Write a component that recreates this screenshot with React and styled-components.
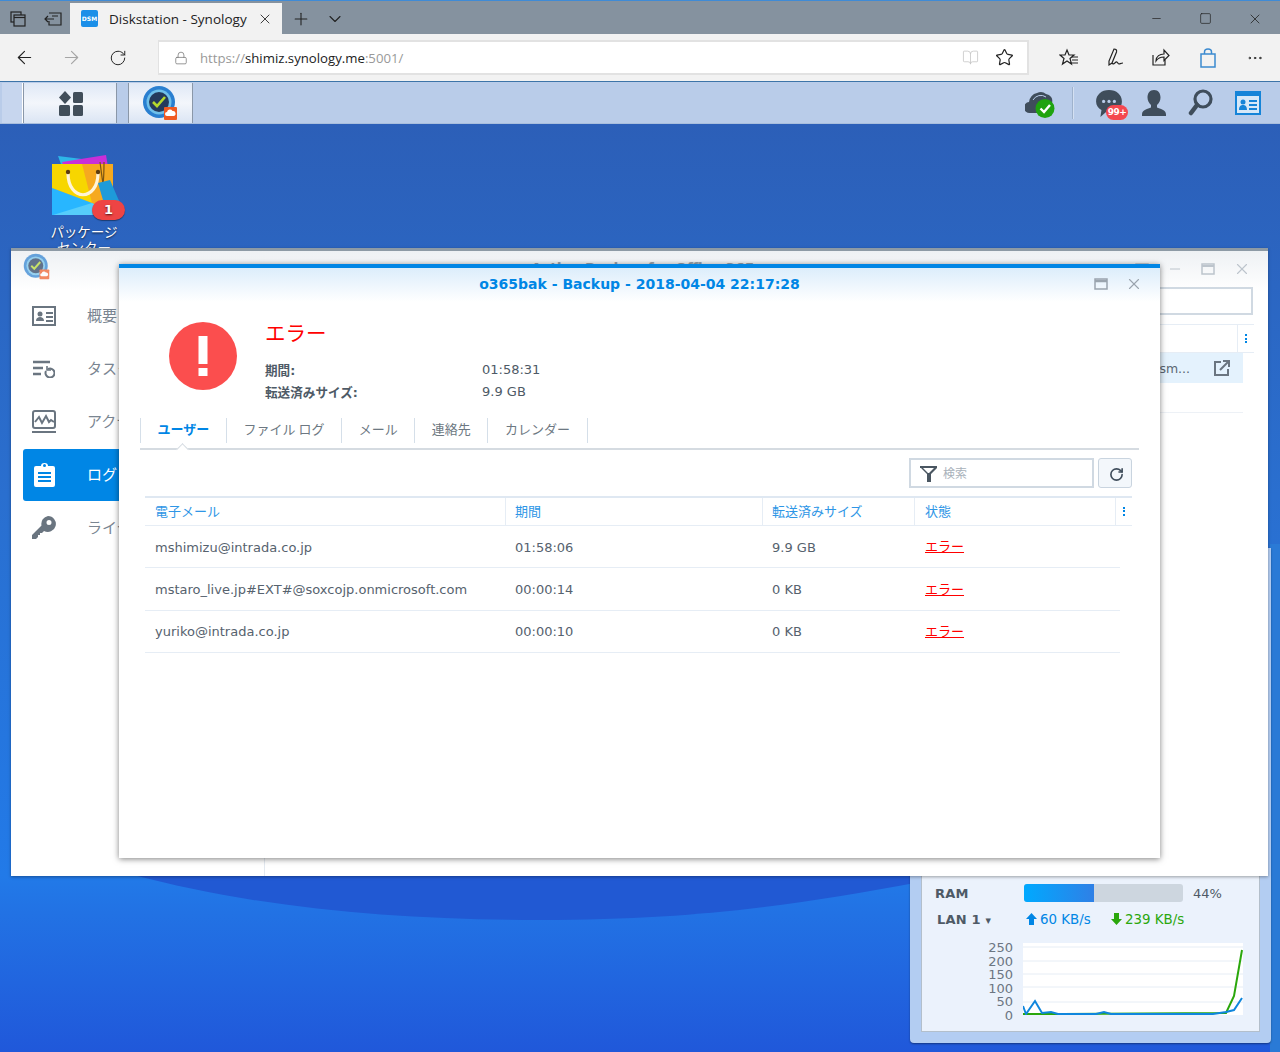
import React from "react";
import styled, { createGlobalStyle } from "styled-components";
import { ArrowLeft, ArrowRight, RotateCw, Lock, Star, Plus, ChevronDown, X, Minus, Square, MoreHorizontal, BookOpen } from "lucide-react";

const SANS = `"DejaVu Sans", "Noto Sans CJK JP", sans-serif`;
const UI = `"Open Sans", "Noto Sans CJK JP", sans-serif`;

const GlobalStyle = createGlobalStyle`
  html, body { margin: 0; padding: 0; background: #2a62bd; }
  * { box-sizing: border-box; }
`;

const Page = styled.div`
  display: flex;
  flex-direction: column;
  width: 1280px;
  height: 1052px;
  overflow: hidden;
  font-family: ${SANS};
`;

/* browser chrome */
const TabStrip = styled.div`
  display: flex;
  align-items: stretch;
  height: 34px;
  padding-top: 2px;
  background: #85929f;
  border-top: 1px solid #3f8bd6;
  color: #222;
`;

const StripButton = styled.div`
  display: flex;
  align-items: center;
  justify-content: center;
  width: ${(p) => p.$w || 35}px;
`;

const BrowserTab = styled.div`
  display: flex;
  align-items: center;
  width: 212px;
  padding: 0 9px 0 11px;
  background: #f2f2f2;
  font-family: ${UI};
  font-size: 13.5px;
  color: #222;
`;

const Favicon = styled.div`
  width: 17px;
  height: 17px;
  margin-right: 11px;
  border-radius: 2px;
  background: #1b8fe8;
  color: #fff;
  font: bold 6px/17px "DejaVu Sans", sans-serif;
  text-align: center;
`;

const TabTitle = styled.div`
  flex: 1;
  white-space: nowrap;
`;

const WinButtons = styled.div`
  display: flex;
  margin-left: auto;
  padding-right: 1px;
`;

const WinButton = styled.div`
  display: flex;
  align-items: center;
  justify-content: center;
  width: 49px;
`;

const AddressRow = styled.div`
  display: flex;
  align-items: center;
  height: 48px;
  background: #f2f2f2;
  border-bottom: 1px solid #3d74a8;
  color: #222;
`;

const NavButton = styled.div`
  display: flex;
  align-items: center;
  justify-content: center;
  width: ${(p) => p.$w || 46.5}px;
  color: ${(p) => (p.$dim ? "#a5a5a5" : "#222")};
`;

const UrlBox = styled.div`
  display: flex;
  align-items: center;
  width: 871px;
  height: 35px;
  margin-left: 17px;
  padding: 0 13px 0 15px;
  background: #fff;
  border: 2px solid #e2e2e2;
  border-left-width: 1px;
  font-family: ${UI};
  font-size: 13.2px;
  color: #999;
`;

const UrlText = styled.div`
  margin-left: 12px;
  flex: 1;
  b { font-weight: 400; color: #222; }
`;

const BookSlot = styled.div`
  display: flex;
  margin-right: 16px;
`;

const RightTools = styled.div`
  display: flex;
  align-items: center;
  margin-left: 17px;
`;

/* DSM taskbar */
const Taskbar = styled.div`
  display: flex;
  align-items: stretch;
  height: 42px;
  padding: 1px 0 0 2px;
  background: #b9cce9;
  border-bottom: 1px solid #a9bedd;
`;

const TaskSpacer = styled.div`
  width: 21px;
  background: #c7d6ee;
  border-right: 1px solid #fff;
`;

const TaskButton = styled.div`
  display: flex;
  align-items: center;
  justify-content: center;
  width: ${(p) => p.$w}px;
  margin-right: ${(p) => p.$gap || 0}px;
  padding: ${(p) => p.$pad || 0};
  background: linear-gradient(#dfe8f6, #f3f6fb 50%, #dbe5f4);
  border-left: 1px solid #8a97a8;
  border-right: 1px solid #8a97a8;
`;

const TaskRight = styled.div`
  display: flex;
  align-items: center;
  margin-left: auto;
  padding-right: 13px;
`;

const TaskDivider = styled.div`
  width: 2px;
  height: 32px;
  margin: 0 21px 0 15px;
  background: #9fb2cc;
  border-right: 1px solid #d4e0f2;
`;

const TaskIcon = styled.div`
  position: relative;
  display: flex;
  align-items: center;
  width: 32px;
  height: 32px;
  margin-left: ${(p) => p.$ml || 0}px;
`;

const CountBadge = styled.div`
  position: absolute;
  left: 11px;
  top: 18px;
  width: 22px;
  height: 15px;
  border-radius: 8px;
  background: #f4474f;
  color: #fff;
  font: bold 9px/15px "DejaVu Sans", sans-serif;
  text-align: center;
  letter-spacing: -0.5px;
`;

/* desktop */
const Desktop = styled.div`
  position: relative;
  flex: 1;
  overflow: hidden;
`;

const Wallpaper = styled.svg`
  position: absolute;
  left: 0;
  top: 0;
`;

const DesktopIcon = styled.div`
  position: absolute;
  left: 33px;
  top: 30px;
  width: 102px;
  color: #fff;
  font-size: 13.5px;
  font-family: "Noto Sans CJK JP", sans-serif;
  line-height: 16px;
  text-align: center;
  text-shadow: 0 1px 2px rgba(0, 0, 0, 0.7);
`;

const BagWrap = styled.div`
  position: relative;
  width: 76px;
  height: 68px;
  margin: 0 0 0 19px;
  svg { display: block; }
`;

const IconBadge = styled.div`
  position: absolute;
  left: 40px;
  top: 46px;
  width: 33px;
  height: 20px;
  border-radius: 10px;
  background: #ee4444;
  box-shadow: 0 1px 1px rgba(0, 0, 0, 0.4);
  color: #fff;
  font: bold 13px/20px "DejaVu Sans", sans-serif;
  text-align: center;
`;

const DesktopLabel = styled.div`
  margin-top: 1px;
`;

const Widget = styled.div`
  position: absolute;
  left: 910px;
  top: 424px;
  width: 361px;
  height: 495px;
  display: flex;
  flex-direction: column;
  justify-content: flex-end;
  padding: 0 11px 11px;
  background: #b3cdf2;
  border-radius: 0 0 4px 4px;
  box-shadow: 0 1px 2px rgba(0, 0, 0, 0.4);
`;

const WidgetInner = styled.div`
  height: 190px;
  padding: 0 15px 0 13px;
  margin-top: auto;
  background: #ebf2fc;
  border: 1px solid #b3bfcb;
  border-width: 0 1px 1px 1px;
`;

const RamRow = styled.div`
  display: flex;
  align-items: center;
  height: 18px;
  margin-top: 42px;
  font-size: 13px;
  color: #4e5a66;
`;

const RowLabel = styled.div`
  width: ${(p) => p.$w}px;
  margin-left: ${(p) => p.$ml || 0}px;
  font-weight: bold;
  letter-spacing: 0.2px;
  white-space: nowrap;
`;

const RamBar = styled.div`
  width: 159px;
  height: 18px;
  margin-right: 10px;
  border-radius: 3px;
  overflow: hidden;
  background: #cdd6df;
`;

const RamFill = styled.div`
  height: 100%;
  background: linear-gradient(90deg, #00a9ff, #2f80e6);
`;

const LanRow = styled.div`
  display: flex;
  align-items: center;
  height: 18px;
  margin-top: 8px;
  font-size: 13px;
  color: #4e5a66;
`;

const Speed = styled.div`
  display: flex;
  align-items: center;
  gap: 3px;
  width: ${(p) => p.$w}px;
  margin-left: ${(p) => p.$ml || 0}px;
  font-size: 13.4px;
  color: ${(p) => p.$c};
  white-space: nowrap;
`;

const ChartRow = styled.div`
  display: flex;
  margin-top: 13px;
`;

const ChartAxis = styled.div`
  width: 78px;
  font-size: 13px;
  line-height: 13.6px;
  color: #6b7682;
  text-align: right;
`;

const Chart = styled.svg`
  display: block;
  margin: 2px 0 0 10px;
  background: #fff;
`;

/* app window */
const AppWindow = styled.div`
  position: absolute;
  left: 11px;
  top: 124px;
  width: 1257px;
  height: 628px;
  display: flex;
  background: #fff;
  border-top: 3px solid #8d9aa5;
  box-shadow: 0 1px 3px rgba(0, 0, 0, 0.35);
`;

const Sidebar = styled.div`
  width: 254px;
  height: 100%;
  padding: 0 0 0 12px;
  border-right: 1px solid;
  border-image: linear-gradient(transparent 60px, #e3e9f0 60px) 1;
  background: linear-gradient(#eef1f4, #fff 40px);
`;

const SideLogo = styled.div`
  height: 39px;
  padding: 2px 0 0 0;
  opacity: 0.7;
`;

const NavItem = styled.div`
  display: flex;
  align-items: center;
  height: 52px;
  margin-bottom: 1px;
  padding-left: 9px;
  border-radius: 3px;
  font-size: 15px;
  white-space: nowrap;
  color: ${(p) => (p.$active ? "#fff" : "#7a8591")};
  background: ${(p) => (p.$active ? "#0086e5" : "transparent")};
`;

const NavIcon = styled.div`
  display: flex;
  justify-content: center;
  width: 24px;
  margin-right: 31px;
  color: ${(p) => (p.$active ? "#fff" : "#6a7580")};
`;

const NavLabel = styled.span`
  margin-top: -4px;
`;

const AppMain = styled.div`
  flex: 1;
  display: flex;
  flex-direction: column;
  min-width: 0;
  background: linear-gradient(#eef1f4, #fff 40px);
`;

const AppTitleBar = styled.div`
  display: flex;
  align-items: center;
  height: 36px;
  padding-right: 17px;
  color: #bcc4cc;
`;

const AppTitle = styled.div`
  margin-left: 266px;
  width: 340px;
  margin-top: -3px;
  font-size: 14px;
  font-weight: bold;
  color: #98a2ab;
  white-space: nowrap;
`;

const AppControls = styled.div`
  display: flex;
  align-items: center;
  gap: 18px;
  margin-left: auto;
`;

const AppSearch = styled.div`
  width: 300px;
  height: 28px;
  margin-left: 688px;
  border: 2px solid #d0d9e2;
`;

const AppHeader = styled.div`
  display: flex;
  justify-content: flex-end;
  align-items: center;
  height: 29px;
  margin-top: 9px;
  margin-right: 14px;
  border-top: 1px solid #e6edf5;
  border-bottom: 1px solid #e6edf5;
`;

const HeaderDots = styled.div`
  display: flex;
  flex-direction: column;
  gap: 1.5px;
  align-items: center;
  justify-content: center;
  width: ${(p) => p.$w || 17}px;
  height: 100%;
  border-left: ${(p) => (p.$plain ? "0" : "1px solid #e6edf5")};
`;

const Dot = styled.span`
  width: 2px;
  height: 2px;
  background: #0086e5;
`;

const AppRow = styled.div`
  display: flex;
  align-items: center;
  justify-content: flex-end;
  height: 30px;
  margin-right: 25px;
  padding-right: 13px;
  gap: 24px;
  background: #e4f2fd;
  font-size: 12.5px;
  color: #5a6672;
`;

const AppRule = styled.div`
  height: 30px;
  margin-right: 25px;
  border-bottom: 1px solid #edf1f6;
`;

/* modal */
const Modal = styled.div`
  position: absolute;
  left: 119px;
  top: 140px;
  width: 1041px;
  height: 594px;
  display: flex;
  flex-direction: column;
  padding: 0 21px;
  background: linear-gradient(#dcedfb, #fff 34px) no-repeat;
  border-top: 4px solid #0086e5;
  box-shadow: 0 1px 6px rgba(0, 0, 0, 0.5);
`;

const ModalHeader = styled.div`
  position: relative;
  flex: none;
  height: 30px;
  font-size: 14px;
  font-weight: bold;
  line-height: 32px;
  color: #0086e5;
  text-align: center;
`;

const ModalControls = styled.div`
  position: absolute;
  right: -4px;
  top: 7px;
  display: flex;
  align-items: center;
  gap: 17px;
  color: #9aa4ae;
`;

const Summary = styled.div`
  display: flex;
  flex: none;
  height: 119px;
  padding-left: 29px;
`;

const ErrorCircle = styled.div`
  flex: none;
  width: 68px;
  height: 68px;
  margin-top: 24px;
  margin-right: 28px;
`;

const SummaryBody = styled.div`
  padding-top: 19px;
`;

const ErrorTitle = styled.div`
  font-family: "Noto Sans CJK JP", sans-serif;
  font-size: 20.5px;
  line-height: 30px;
  color: #ff0000;
`;

const InfoRow = styled.div`
  display: flex;
  align-items: center;
  height: 21.5px;
  font-size: 13px;
  color: #4e5a66;
  margin-top: ${(p) => p.$mt || 0}px;
`;

const InfoLabel = styled.div`
  width: 217px;
  font-size: 12.6px;
  font-weight: bold;
`;

const TabBar = styled.div`
  display: flex;
  flex: none;
  align-items: flex-start;
  position: relative;
  height: 33px;
  padding-top: 1px;
  border-bottom: 2px solid #d5dbe1;
`;

const TabItem = styled.div`
  position: relative;
  height: 25px;
  padding: 0 16.6px;
  border-right: 1px solid #d5dfe9;
  border-left: ${(p) => (p.$first ? "1px solid #d5dfe9" : "0")};
  font-size: 13px;
  line-height: 22px;
  white-space: nowrap;
  font-family: "Noto Sans CJK JP", sans-serif;
  font-weight: ${(p) => (p.$active ? "bold" : "normal")};
  color: ${(p) => (p.$active ? "#0086e5" : "#6d7882")};
`;

const TabNotch = styled.span`
  position: absolute;
  left: 37px;
  bottom: -11px;
  width: 9px;
  height: 9px;
  background: #fff;
  border-left: 1px solid #d5dbe1;
  border-top: 1px solid #d5dbe1;
  transform: rotate(45deg);
`;

const Toolbar = styled.div`
  display: flex;
  flex: none;
  justify-content: flex-end;
  gap: 4px;
  height: 30px;
  margin-top: 8px;
  padding-right: 7px;
`;

const SearchBox = styled.div`
  display: flex;
  align-items: center;
  width: 185px;
  height: 30px;
  padding-left: 9px;
  border: 2px solid #d0d9e2;
  font-size: 12px;
  color: #a8b1ba;
  font-family: "Noto Sans CJK JP", sans-serif;
`;

const SearchHint = styled.span`
  margin: -2px 0 0 6px;
`;

const RefreshButton = styled.div`
  display: flex;
  align-items: center;
  justify-content: center;
  width: 34px;
  height: 30px;
  padding: 2px 0 0 2px;
  border: 1px solid #c9d4df;
  border-radius: 3px;
  background: #f3f7fb;
`;

const Table = styled.div`
  display: flex;
  flex-direction: column;
  margin: 8px 7px 0 5px;
`;

const HeaderRow = styled.div`
  display: grid;
  grid-template-columns: 361px 257px 152px 201px 16px;
  height: 30px;
  border-top: 2px solid #dfe8f2;
  border-bottom: 1px solid #e6edf5;
`;

const HeaderCell = styled.div`
  display: flex;
  align-items: center;
  padding-left: ${(p) => (p.$last ? 0 : 10)}px;
  padding-bottom: ${(p) => (p.$last ? 1 : 3)}px;
  font-size: 13px;
  color: #2e96e6;
  font-family: "Noto Sans CJK JP", sans-serif;
  border-right: ${(p) => (p.$last ? "0" : "1px solid #e6edf5")};
  &:nth-child(2), &:nth-child(3) { padding-left: 9px; }
`;

const BodyRow = styled.div`
  display: grid;
  grid-template-columns: 361px 257px 152px 201px;
  margin-right: 12px;
  height: 42.4px;
  align-items: center;
  border-bottom: 1px solid #e6edf5;
`;

const BodyCell = styled.div`
  padding-left: 10px;
  padding-top: ${(p) => (p.$link ? 0 : 1)}px;
  padding-bottom: ${(p) => (p.$link ? 2 : 0)}px;
  font-size: 13px;
  white-space: nowrap;
  color: #56626e;
  &:nth-child(2), &:nth-child(3) { padding-left: 9px; }
`;

const ErrorLink = styled.span`
  font-family: "Noto Sans CJK JP", sans-serif;
  color: #ff0000;
  text-decoration: underline;
`;

const NAV = [
  { label: "概要", icon: "card" },
  { label: "タスクリスト", icon: "tasks" },
  { label: "アクティビティ", icon: "activity" },
  { label: "ログ", icon: "log", active: true },
  { label: "ライセンス", icon: "key" },
];

const TABS = ["ユーザー", "ファイル ログ", "メール", "連絡先", "カレンダー"];

const ROWS = [
  ["mshimizu@intrada.co.jp", "01:58:06", "9.9 GB"],
  ["mstaro_live.jp#EXT#@soxcojp.onmicrosoft.com", "00:00:14", "0 KB"],
  ["yuriko@intrada.co.jp", "00:00:10", "0 KB"],
];

const AXIS = [250, 200, 150, 100, 50, 0];

function NavGlyph({ name }) {
  if (name === "card") {
    return (
      <svg width="24" height="22" viewBox="0 0 24 22" fill="currentColor">
        <path fillRule="evenodd" d="M0 1h24v20H0zM2 3v16h20V3z" />
        <circle cx="8" cy="9" r="2.5" />
        <path d="M4 16c0-3 2-4 4-4s4 1 4 4zM14 7h7v2h-7zM14 11h7v2h-7zM14 15h7v2h-7z" />
      </svg>
    );
  }
  if (name === "tasks") {
    return (
      <svg width="22" height="18" viewBox="0 0 22 18" fill="none" stroke="currentColor" strokeWidth="2.4">
        <path d="M0 2h17M0 8h10M0 14h8" />
        <path d="M13 11a4.5 4.5 0 1 0 2-2" strokeWidth="2" />
        <path d="M14 6v4h4" strokeWidth="1.6" />
      </svg>
    );
  }
  if (name === "activity") {
    return (
      <svg width="24" height="24" viewBox="0 0 24 24" fill="none" stroke="currentColor" strokeWidth="2">
        <rect x="1" y="1" width="22" height="17" rx="2" />
        <path d="M3 12l4-5 3 6 4-7 3 6 2-2 3 2" />
        <path d="M0 22h24" />
      </svg>
    );
  }
  if (name === "log") {
    return (
      <svg width="21" height="24" viewBox="0 0 21 24" fill="currentColor">
        <path fillRule="evenodd" d="M2 3h5a3.5 3 0 0 1 7 0h5a2 2 0 0 1 2 2v17a2 2 0 0 1-2 2H2a2 2 0 0 1-2-2V5a2 2 0 0 1 2-2zM9 2.5a1.5 1.5 0 1 0 3 0 1.5 1.5 0 0 0-3 0z" />
        <path d="M4 9h13v2H4zM4 13h13v2H4zM4 17h13v2H4z" fill="#0086e5" />
      </svg>
    );
  }
  return (
    <svg width="24" height="24" viewBox="0 0 24 24" fill="currentColor">
      <path fillRule="evenodd" d="M16 0a8 8 0 1 1-4 15l-2 2H8v2H6v2l-2 2H0v-4l9.5-9.5A8 8 0 0 1 16 0zm1 4a2.5 2.5 0 1 0 0 5 2.5 2.5 0 0 0 0-5z" />
    </svg>
  );
}

function BackupLogo({ size }) {
  return (
    <svg width={size} height={size} viewBox="0 0 36 36">
      <circle cx="17" cy="17" r="16" fill="#2a7fd0" />
      <circle cx="17" cy="17" r="12.5" fill="#6fc0ea" />
      <circle cx="17" cy="17" r="10" fill="#243a5c" />
      <path d="M11 17l4 4 8-9" fill="none" stroke="#b5d92d" strokeWidth="2.6" />
      <rect x="22" y="22" width="13" height="13" rx="1" fill="#f05a22" />
      <path d="M25 31a2 2 0 0 1 0-4 3 3 0 0 1 5.5-1 2.5 2.5 0 0 1 1 5z" fill="#fff" />
    </svg>
  );
}

function BagIcon() {
  return (
    <svg width="72" height="62" viewBox="0 0 72 62">
      <path d="M6 2l40 5 8 6H10z" fill="#2db6e8" />
      <path d="M10 8L54 1l2 12H12z" fill="#c92fd8" />
      <path d="M0 10h61v51H0z" fill="#f6a91f" />
      <path d="M0 10h30l10 39L0 34z" fill="#f7d600" />
      <path d="M0 34l40 15 21 12H0z" fill="#28b6ff" />
      <path d="M1 61l39-12 21 12z" fill="#56cdfb" />
      <path d="M16 19c0 29 30 29 30 0" fill="none" stroke="#fff4d8" strokeWidth="3.2" />
      <circle cx="16" cy="18" r="2.2" fill="#5d3c10" />
      <circle cx="46" cy="18" r="2.2" fill="#5d3c10" />
      <path d="M48 8c1 8 2 15 3 22M52 8c0 8 0 15-1 22" fill="none" stroke="#7a5312" strokeWidth="1.2" />
      <path d="M46 29l12-3 10 23-15 4z" fill="#1e9bd9" />
    </svg>
  );
}

const DOWN_LINE = "0,71 30,71 40,71 203,70 211,53 219,7";
const UP_LINE = "0,63 3,71 12,58 19,70 28,69 35,71 73,71 81,69 88,71 190,71 203,69 211,67 219,55";

export default function App() {
  return (
    <Page>
      <GlobalStyle />
      <TabStrip>
        <StripButton $w={35}>
          <svg width="16" height="16" viewBox="0 0 16 16" fill="none" stroke="#222" strokeWidth="1.2"><rect x="1" y="1" width="10" height="10" /><rect x="4" y="4" width="11" height="11" fill="#85929f" /><path d="M4 6.5h11" /></svg>
        </StripButton>
        <StripButton $w={35}>
          <svg width="18" height="14" viewBox="0 0 18 14" fill="none" stroke="#222" strokeWidth="1.2"><path d="M5 1h12v12H5V9M1 7h9M4 4L1 7l3 3M8 4h6" /></svg>
        </StripButton>
        <BrowserTab>
          <Favicon>DSM</Favicon>
          <TabTitle>Diskstation - Synology</TabTitle>
          <X size={16} strokeWidth={1.3} />
        </BrowserTab>
        <StripButton $w={38}><Plus size={20} strokeWidth={1.3} /></StripButton>
        <StripButton $w={29}><ChevronDown size={20} strokeWidth={1.3} /></StripButton>
        <WinButtons>
          <WinButton><Minus size={13} strokeWidth={1.3} /></WinButton>
          <WinButton><Square size={13} strokeWidth={1.3} /></WinButton>
          <WinButton><X size={16} strokeWidth={1.2} /></WinButton>
        </WinButtons>
      </TabStrip>
      <AddressRow>
        <NavButton $w={48}><ArrowLeft size={21} strokeWidth={1.3} /></NavButton>
        <NavButton $dim $w={46}><ArrowRight size={21} strokeWidth={1.3} /></NavButton>
        <NavButton $w={47}><RotateCw size={18} strokeWidth={1.3} /></NavButton>
        <UrlBox>
          <Lock size={14} strokeWidth={1.3} color="#777" />
          <UrlText>https://<b>shimiz.synology.me</b>:5001/</UrlText>
          <BookSlot><BookOpen size={17} strokeWidth={1.1} color="#c4c4c4" /></BookSlot>
          <Star size={19} strokeWidth={1.5} color="#222" />
        </UrlBox>
        <RightTools>
          <NavButton $w={46}>
            <svg width="20" height="20" viewBox="0 0 20 20" fill="none" stroke="#222" strokeWidth="1.2"><path d="M8 2l2 5h5l-4 3.5 1.500 5.500L8 13l-4.500 3L5 10.5 1 7h5z" /><path d="M13 9h6M13 12h6M12 15h7" /></svg>
          </NavButton>
          <NavButton $w={46}>
            <svg width="20" height="20" viewBox="0 0 20 20" fill="none" stroke="#222" strokeWidth="1.2"><path d="M9 1c2 0 3 1 2.5 3L7 15l-3 2V13zM7 15c1 2 3 0 4-1s2 2 3 2 2-1 4-1" /></svg>
          </NavButton>
          <NavButton $w={46}>
            <svg width="20" height="20" viewBox="0 0 20 20" fill="none" stroke="#222" strokeWidth="1.2"><path d="M2 7v10h12v-5M5 13c0-5 4-7 8-7V2l5 5.5-5 5V9c-3 0-6 1-8 4z" /></svg>
          </NavButton>
          <NavButton $w={48}>
            <svg width="20" height="20" viewBox="0 0 20 20" fill="none" stroke="#3b8ad0" strokeWidth="1.5"><path d="M3 6h14v13H3zM6.5 6V4a3.5 3 0 0 1 7 0v2" /></svg>
          </NavButton>
          <NavButton $w={46}><MoreHorizontal size={18} strokeWidth={1.3} /></NavButton>
        </RightTools>
      </AddressRow>
      <Taskbar>
        <TaskSpacer />
        <TaskButton $w={94} $gap={11} $pad="2px 0 0 2px">
          <svg width="26" height="26" viewBox="0 0 26 26" fill="#414e5a">
            <path d="M7 0l6 6.5-6 6.5-6-6.5z" />
            <rect x="15" y="1" width="10" height="11" rx="1.5" />
            <rect x="1" y="14" width="11" height="11" rx="1.5" />
            <rect x="15" y="14" width="10" height="11" rx="1.5" />
          </svg>
        </TaskButton>
        <TaskButton $w={65} $pad="0 2px 0 0"><BackupLogo size={36} /></TaskButton>
        <TaskRight>
          <TaskIcon>
            <svg width="32" height="32" viewBox="0 0 32 32">
              <path d="M5 26a5.500 5.500 0 0 1-1-11 10 10 0 0 1 8-9 8 8 0 0 1 9 1 7 7 0 0 1 6 9v10z" fill="#3f4d5b" />
              <path d="M8 13a9 9 0 0 1 13-3" fill="none" stroke="#b9cce9" strokeWidth="1" />
              <circle cx="20" cy="21.5" r="9.5" fill="#1fa30f" />
              <path d="M15.5 21.5l3.5 3.5 6-7" fill="none" stroke="#fff" strokeWidth="2.4" />
            </svg>
          </TaskIcon>
          <TaskDivider />
          <TaskIcon>
            <svg width="28" height="28" viewBox="0 0 26 26" fill="#3f4d5b">
              <path d="M13 1c7 0 12 4.5 12 10.5S20 22 13 22c-1 0-2 0-3-.3L5 26l1-6.500C3 17.500 1 15 1 11.500 1 5.500 6 1 13 1z" />
              <circle cx="8" cy="11.5" r="1.5" fill="#b9cce9" />
              <circle cx="13" cy="11.5" r="1.5" fill="#b9cce9" />
              <circle cx="18" cy="11.5" r="1.5" fill="#b9cce9" />
            </svg>
            <CountBadge>99+</CountBadge>
          </TaskIcon>
          <TaskIcon $ml={14}>
            <svg width="26" height="28" viewBox="0 0 26 28" fill="#3f4d5b">
              <path d="M13 1c4.500 0 6.500 3.500 6.500 7.500 0 3-1.500 6-3.500 7.500v2.500c3 1.500 9 2 9 7V27H1v-1.500c0-5 6-5.500 9-7V16c-2-1.500-3.500-4.500-3.500-7.500C6.500 4.500 8.500 1 13 1z" />
            </svg>
          </TaskIcon>
          <TaskIcon $ml={15}>
            <svg width="26" height="28" viewBox="0 0 26 28" fill="none" stroke="#3f4d5b">
              <circle cx="15" cy="10" r="8" strokeWidth="3.2" />
              <path d="M9 16L3 24" strokeWidth="4.5" strokeLinecap="round" />
            </svg>
          </TaskIcon>
          <TaskIcon $ml={15}>
            <svg width="26" height="24" viewBox="0 0 26 24">
              <rect width="26" height="24" fill="#1584d8" />
              <rect x="2" y="5" width="22" height="17" fill="#d6e8f8" />
              <circle cx="8" cy="11" r="2.5" fill="#1584d8" />
              <path d="M4 19c0-4 2-5 4-5s4 1 4 5zM14 9h8v2h-8zM14 13h8v2h-8zM14 17h8v2h-8z" fill="#1584d8" />
            </svg>
          </TaskIcon>
        </TaskRight>
      </Taskbar>
      <Desktop>
        <Wallpaper width="1280" height="928" viewBox="0 0 1280 928">
          <defs>
            <linearGradient id="wall" x1="0" y1="0" x2="0" y2="1">
              <stop offset="0" stopColor="#2c5fb8" />
              <stop offset="0.4" stopColor="#2a6fcf" />
              <stop offset="0.81" stopColor="#227ae8" />
              <stop offset="0.85" stopColor="#2272e4" />
              <stop offset="1" stopColor="#2058da" />
            </linearGradient>
          </defs>
          <rect width="1280" height="928" fill="url(#wall)" />
          <path d="M130 750C260 785 400 796 540 796 700 796 800 780 920 758V740H130z" fill="#2159d3" />
          <path d="M1270 420h10v508h-10z" fill="#2a7ad6" />
        </Wallpaper>
        <DesktopIcon>
          <BagWrap>
            <BagIcon />
            <IconBadge>1</IconBadge>
          </BagWrap>
          <DesktopLabel>パッケージ<br />センター</DesktopLabel>
        </DesktopIcon>
        <Widget>
          <WidgetInner>
            <RamRow>
              <RowLabel $w={89}>RAM</RowLabel>
              <RamBar><RamFill style={{ width: "44%" }} /></RamBar>
              <span>44%</span>
            </RamRow>
            <LanRow>
              <RowLabel $w={87} $ml={2}>LAN 1 <small>▾</small></RowLabel>
              <Speed $w={85} $ml={2} $c="#0086e5">
                <svg width="11" height="12" viewBox="0 0 11 12" fill="currentColor"><path d="M5.5 0L11 6H8v6H3V6H0z" /></svg>
                60 KB/s
              </Speed>
              <Speed $w={90} $c="#2aa70c">
                <svg width="11" height="12" viewBox="0 0 11 12" fill="currentColor"><path d="M5.5 12L11 6H8V0H3v6H0z" /></svg>
                239 KB/s
              </Speed>
            </LanRow>
            <ChartRow>
              <ChartAxis>
                {AXIS.map((a) => <div key={a}>{a}</div>)}
              </ChartAxis>
              <Chart width="220" height="72" viewBox="0 0 220 72">
                {[4, 18, 31, 44, 59].map((y) => (
                  <path key={y} d={`M0 ${y}h220`} stroke="#e6edf5" strokeWidth="1" />
                ))}
                <polyline points={DOWN_LINE} fill="none" stroke="#2aa70c" strokeWidth="2" />
                <polyline points={UP_LINE} fill="none" stroke="#0f86dd" strokeWidth="2" />
              </Chart>
            </ChartRow>
          </WidgetInner>
        </Widget>
        <AppWindow>
          <Sidebar>
            <SideLogo><BackupLogo size={27} /></SideLogo>
            {NAV.map((item) => (
              <NavItem key={item.label} $active={item.active}>
                <NavIcon $active={item.active}><NavGlyph name={item.icon} /></NavIcon>
                <NavLabel>{item.label}</NavLabel>
              </NavItem>
            ))}
          </Sidebar>
          <AppMain>
            <AppTitleBar>
              <AppTitle>Active Backup for Office 365</AppTitle>
              <AppControls>
                <svg width="14" height="14" viewBox="0 0 14 14" fill="none" stroke="currentColor" strokeWidth="1.5"><path d="M1 2h12v10H1z" /></svg>
                <Minus size={16} strokeWidth={1.5} />
                <svg width="14" height="12" viewBox="0 0 14 12" fill="none" stroke="currentColor" strokeWidth="1.5"><rect x="1" y="1" width="12" height="10" /><path d="M1 3h12" strokeWidth="2" /></svg>
                <X size={18} strokeWidth={1.5} />
              </AppControls>
            </AppTitleBar>
            <AppSearch />
            <AppHeader>
              <HeaderDots><Dot /><Dot /><Dot /></HeaderDots>
            </AppHeader>
            <AppRow>
              <span>sm...</span>
              <svg width="16" height="16" viewBox="0 0 16 16" fill="none" stroke="#6a7580" strokeWidth="2"><path d="M7 2H1v13h13V9M6 10l8-8M9 1h6v6" /></svg>
            </AppRow>
            <AppRule />
          </AppMain>
        </AppWindow>
        <Modal>
          <ModalHeader>
            o365bak - Backup - 2018-04-04 22:17:28
            <ModalControls>
              <svg width="14" height="12" viewBox="0 0 14 12" fill="none" stroke="currentColor" strokeWidth="1.5"><rect x="1" y="1" width="12" height="10" /><path d="M1 3h12" strokeWidth="2.5" /></svg>
              <X size={18} strokeWidth={1.5} />
            </ModalControls>
          </ModalHeader>
          <Summary>
            <ErrorCircle>
              <svg width="68" height="68" viewBox="0 0 68 68">
                <circle cx="34" cy="34" r="34" fill="#fb4e4e" />
                <rect x="29.5" y="14" width="9" height="28" fill="#fff" />
                <rect x="29.5" y="46" width="9" height="8" fill="#fff" />
              </svg>
            </ErrorCircle>
            <SummaryBody>
              <ErrorTitle>エラー</ErrorTitle>
              <InfoRow $mt={12}><InfoLabel>期間:</InfoLabel>01:58:31</InfoRow>
              <InfoRow><InfoLabel>転送済みサイズ:</InfoLabel>9.9 GB</InfoRow>
            </SummaryBody>
          </Summary>
          <TabBar>
            {TABS.map((t, i) => (
              <TabItem key={t} $first={i === 0} $active={i === 0}>
                {t}
                {i === 0 && <TabNotch />}
              </TabItem>
            ))}
          </TabBar>
          <Toolbar>
            <SearchBox>
              <svg width="17" height="17" viewBox="0 0 17 17" fill="#4a5661"><path d="M0 1h17v2l-6 6v8H7V9L1 3H0zM3 3l5 5h1l5-5z" fillRule="evenodd" /></svg>
              <SearchHint>検索</SearchHint>
            </SearchBox>
            <RefreshButton>
              <RotateCw size={15} strokeWidth={2.6} color="#3f4d5b" />
            </RefreshButton>
          </Toolbar>
          <Table>
            <HeaderRow>
              <HeaderCell>電子メール</HeaderCell>
              <HeaderCell>期間</HeaderCell>
              <HeaderCell>転送済みサイズ</HeaderCell>
              <HeaderCell>状態</HeaderCell>
              <HeaderCell $last>
                <HeaderDots $plain $w={16}><Dot /><Dot /><Dot /></HeaderDots>
              </HeaderCell>
            </HeaderRow>
            {ROWS.map((r) => (
              <BodyRow key={r[0]}>
                <BodyCell>{r[0]}</BodyCell>
                <BodyCell>{r[1]}</BodyCell>
                <BodyCell>{r[2]}</BodyCell>
                <BodyCell $link><ErrorLink>エラー</ErrorLink></BodyCell>
              </BodyRow>
            ))}
          </Table>
        </Modal>
      </Desktop>
    </Page>
  );
}
